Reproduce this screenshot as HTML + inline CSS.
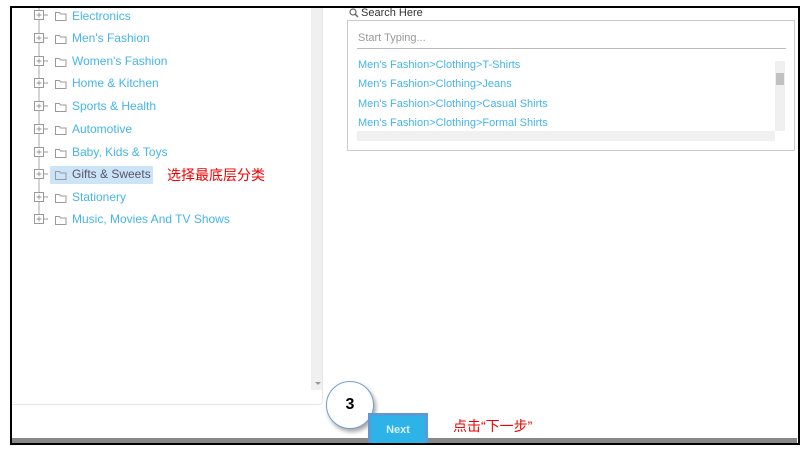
<!DOCTYPE html>
<html><head><meta charset="utf-8"><style>
body{margin:0;width:806px;height:450px;background:#fff;position:relative;overflow:hidden;font-family:"Liberation Sans","Noto Sans CJK SC",sans-serif}
.a{position:absolute}
.t{position:absolute;left:72px;font-size:12px;color:#45b5ea;white-space:nowrap;line-height:14px}
.li{position:absolute;left:358px;font-size:11px;color:#45b5ea;white-space:nowrap;line-height:13px}
</style></head><body>
<div class="a" style="left:10px;top:6px;width:786px;height:437px;border:2px solid #000;border-bottom:none;border-right:2px solid #000"></div>
<div class="a" style="left:12px;top:438px;width:785px;height:5px;background:#888"></div>
<div class="a" style="left:10px;top:443px;width:788px;height:2px;background:#000"></div>
<div class="a" style="left:12px;top:8px;width:310px;height:396px;border-right:1px solid #e6e6e6;border-bottom:1px solid #e6e6e6;border-radius:0 0 4px 0"></div>
<div class="a" style="left:311px;top:8px;width:11px;height:382px;background:#f0f0f0"></div>
<div class="a" style="left:315px;top:382px;width:0;height:0;border-left:3px solid transparent;border-right:3px solid transparent;border-top:3px solid #999"></div>
<div class="a" style="left:50px;top:166px;width:103px;height:18px;background:#cce4f7"></div>
<svg class="a" style="left:0;top:0" width="120" height="240">
<line x1="39" y1="8" x2="39" y2="216" stroke="#aaa"/>
<g fill="none" stroke="#999" stroke-width="1">
<g transform="translate(0,15)"><rect x="34.5" y="-4.5" width="9" height="9" fill="#fff"/><path d="M36.5 0h5M39 -2.5v5M44 0h4"/><path d="M55.5 -2.5h4l1 1.5h5.5v6.5h-10.5z"/></g>
<g transform="translate(0,38)"><rect x="34.5" y="-4.5" width="9" height="9" fill="#fff"/><path d="M36.5 0h5M39 -2.5v5M44 0h4"/><path d="M55.5 -2.5h4l1 1.5h5.5v6.5h-10.5z"/></g>
<g transform="translate(0,61)"><rect x="34.5" y="-4.5" width="9" height="9" fill="#fff"/><path d="M36.5 0h5M39 -2.5v5M44 0h4"/><path d="M55.5 -2.5h4l1 1.5h5.5v6.5h-10.5z"/></g>
<g transform="translate(0,83)"><rect x="34.5" y="-4.5" width="9" height="9" fill="#fff"/><path d="M36.5 0h5M39 -2.5v5M44 0h4"/><path d="M55.5 -2.5h4l1 1.5h5.5v6.5h-10.5z"/></g>
<g transform="translate(0,106)"><rect x="34.5" y="-4.5" width="9" height="9" fill="#fff"/><path d="M36.5 0h5M39 -2.5v5M44 0h4"/><path d="M55.5 -2.5h4l1 1.5h5.5v6.5h-10.5z"/></g>
<g transform="translate(0,129)"><rect x="34.5" y="-4.5" width="9" height="9" fill="#fff"/><path d="M36.5 0h5M39 -2.5v5M44 0h4"/><path d="M55.5 -2.5h4l1 1.5h5.5v6.5h-10.5z"/></g>
<g transform="translate(0,152)"><rect x="34.5" y="-4.5" width="9" height="9" fill="#fff"/><path d="M36.5 0h5M39 -2.5v5M44 0h4"/><path d="M55.5 -2.5h4l1 1.5h5.5v6.5h-10.5z"/></g>
<g transform="translate(0,174)"><rect x="34.5" y="-4.5" width="9" height="9" fill="#fff"/><path d="M36.5 0h5M39 -2.5v5M44 0h4"/><path d="M55.5 -2.5h4l1 1.5h5.5v6.5h-10.5z"/></g>
<g transform="translate(0,197)"><rect x="34.5" y="-4.5" width="9" height="9" fill="#fff"/><path d="M36.5 0h5M39 -2.5v5M44 0h4"/><path d="M55.5 -2.5h4l1 1.5h5.5v6.5h-10.5z"/></g>
<g transform="translate(0,219)"><rect x="34.5" y="-4.5" width="9" height="9" fill="#fff"/><path d="M36.5 0h5M39 -2.5v5M44 0h4"/><path d="M55.5 -2.5h4l1 1.5h5.5v6.5h-10.5z"/></g>
</g></svg>
<div class="t" style="top:9px">Electronics</div>
<div class="t" style="top:31px">Men's Fashion</div>
<div class="t" style="top:54px">Women's Fashion</div>
<div class="t" style="top:76px">Home &amp; Kitchen</div>
<div class="t" style="top:99px">Sports &amp; Health</div>
<div class="t" style="top:122px">Automotive</div>
<div class="t" style="top:145px">Baby, Kids &amp; Toys</div>
<div class="t" style="top:167px;color:#556">Gifts &amp; Sweets</div>
<div class="t" style="top:190px">Stationery</div>
<div class="t" style="top:212px">Music, Movies And TV Shows</div>
<div class="a" style="left:167px;top:167px;font-size:14px;color:#e00;white-space:nowrap;line-height:16px">选择最底层分类</div>
<svg class="a" style="left:349px;top:8px" width="10" height="10"><circle cx="4" cy="4" r="3" fill="none" stroke="#666" stroke-width="1.2"/><path d="M6 6l3 3" stroke="#666" stroke-width="1.5"/></svg>
<div class="a" style="left:361px;top:7px;font-size:11px;color:#333;line-height:13px">Search Here</div>
<div class="a" style="left:347px;top:20px;width:446px;height:129px;border:1px solid #ccc"></div>
<div class="a" style="left:358px;top:32px;font-size:11px;color:#999;line-height:13px">Start Typing...</div>
<div class="a" style="left:357px;top:48px;width:429px;height:1px;background:#bbb"></div>
<div class="li" style="top:59px">Men's Fashion&gt;Clothing&gt;T-Shirts</div>
<div class="li" style="top:78px">Men's Fashion&gt;Clothing&gt;Jeans</div>
<div class="li" style="top:98px">Men's Fashion&gt;Clothing&gt;Casual Shirts</div>
<div class="li" style="top:117px">Men's Fashion&gt;Clothing&gt;Formal Shirts</div>
<div class="a" style="left:775px;top:61px;width:10px;height:70px;background:#f0f0f0"></div>
<div class="a" style="left:776px;top:73px;width:8px;height:12px;background:#c1c1c1"></div>
<div class="a" style="left:357px;top:131px;width:418px;height:10px;background:#f0f0f0"></div>
<div class="a" style="left:326px;top:381px;width:46px;height:46px;border:1px solid #6fa0d0;border-radius:50%;background:#fff;box-shadow:2px 3px 4px rgba(0,0,0,.35);font:bold 16px 'Liberation Sans',sans-serif;text-align:center;line-height:46px;color:#000">3</div>
<div class="a" style="left:368px;top:413px;width:54px;height:27px;border:3px solid #5b9bd5;border-bottom:none;background:#2db3e8;color:#d8f0fb;font:bold 11px 'Liberation Sans',sans-serif;text-align:center;line-height:28px">Next</div>
<div class="a" style="left:453px;top:418px;font-size:14px;color:#e00;white-space:nowrap;line-height:16px">点击“下一步”</div>
</body></html>
